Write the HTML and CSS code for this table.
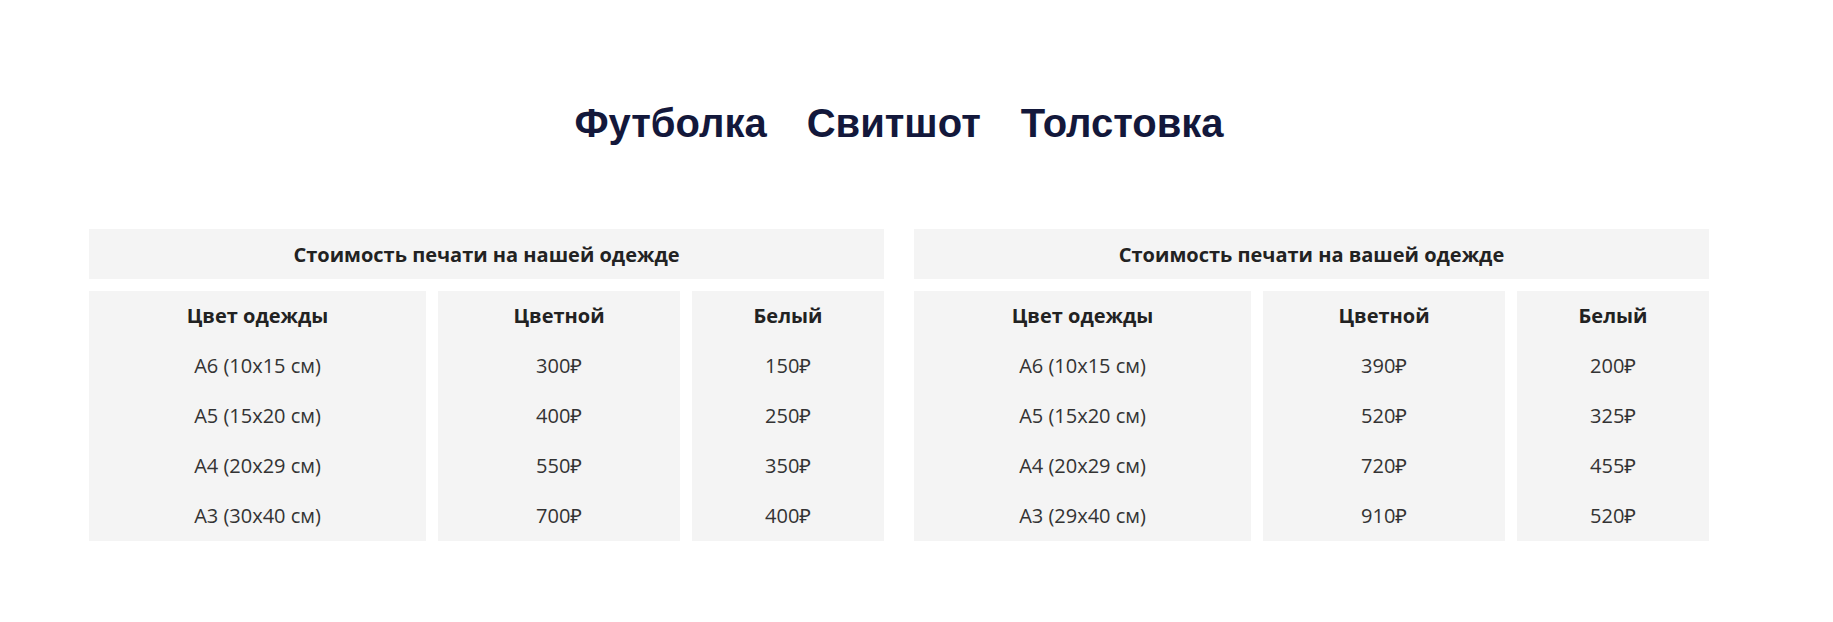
FILE: index.html
```html
<!DOCTYPE html>
<html lang="ru">
<head>
<meta charset="utf-8">
<title>Стоимость печати</title>
<link rel="stylesheet" href="styles.css">
</head>
<body>
<div class="page">
  <nav class="tabs">
    <span class="tab">Футболка</span>
    <span class="tab">Свитшот</span>
    <span class="tab">Толстовка</span>
  </nav>
  <div class="tables">
    <section class="price">
      <div class="price-head">Стоимость печати на нашей одежде</div>
      <div class="cols">
        <div class="col">
          <div class="cell th">Цвет одежды</div>
          <div class="cell">А6 (10х15 см)</div>
          <div class="cell">А5 (15х20 см)</div>
          <div class="cell">А4 (20х29 см)</div>
          <div class="cell">А3 (30х40 см)</div>
        </div>
        <div class="col">
          <div class="cell th">Цветной</div>
          <div class="cell">300₽</div>
          <div class="cell">400₽</div>
          <div class="cell">550₽</div>
          <div class="cell">700₽</div>
        </div>
        <div class="col">
          <div class="cell th">Белый</div>
          <div class="cell">150₽</div>
          <div class="cell">250₽</div>
          <div class="cell">350₽</div>
          <div class="cell">400₽</div>
        </div>
      </div>
    </section>
    <section class="price">
      <div class="price-head">Стоимость печати на вашей одежде</div>
      <div class="cols">
        <div class="col">
          <div class="cell th">Цвет одежды</div>
          <div class="cell">А6 (10х15 см)</div>
          <div class="cell">А5 (15х20 см)</div>
          <div class="cell">А4 (20х29 см)</div>
          <div class="cell">А3 (29х40 см)</div>
        </div>
        <div class="col">
          <div class="cell th">Цветной</div>
          <div class="cell">390₽</div>
          <div class="cell">520₽</div>
          <div class="cell">720₽</div>
          <div class="cell">910₽</div>
        </div>
        <div class="col">
          <div class="cell th">Белый</div>
          <div class="cell">200₽</div>
          <div class="cell">325₽</div>
          <div class="cell">455₽</div>
          <div class="cell">520₽</div>
        </div>
      </div>
    </section>
  </div>
</div>
</body>
</html>
```
FILE: styles.css
```css
html, body {
  margin: 0;
  padding: 0;
  background: #ffffff;
}

.page {
  width: 1620px;
  margin-left: 89px;
  padding-top: 100px;
}

.tabs {
  display: flex;
  justify-content: center;
  gap: 40px;
  height: 46px;
  font-family: "Liberation Sans", Arial, sans-serif;
  font-weight: 700;
  font-size: 40px;
  line-height: 46px;
  color: #13183b;
}

.tables {
  display: flex;
  gap: 30px;
  margin-top: 83px;
}

.price {
  width: 795px;
  display: flex;
  flex-direction: column;
  gap: 12px;
  font-family: "Open Sans", "Noto Sans", sans-serif;
  color: #333333;
}

.price-head {
  height: 50px;
  background: #f4f4f4;
  display: flex;
  align-items: center;
  justify-content: center;
  font-size: 20px;
  font-weight: 700;
  color: #222222;
}

.cols {
  display: grid;
  grid-template-columns: 337px 242px 1fr;
  gap: 12px;
}

.col {
  background: #f4f4f4;
  display: flex;
  flex-direction: column;
}

.cell {
  height: 50px;
  display: flex;
  align-items: center;
  justify-content: center;
  padding-bottom: 2px;
  box-sizing: border-box;
  font-size: 20px;
  font-weight: 400;
}

.cell.th {
  font-weight: 700;
  color: #222222;
}
```
